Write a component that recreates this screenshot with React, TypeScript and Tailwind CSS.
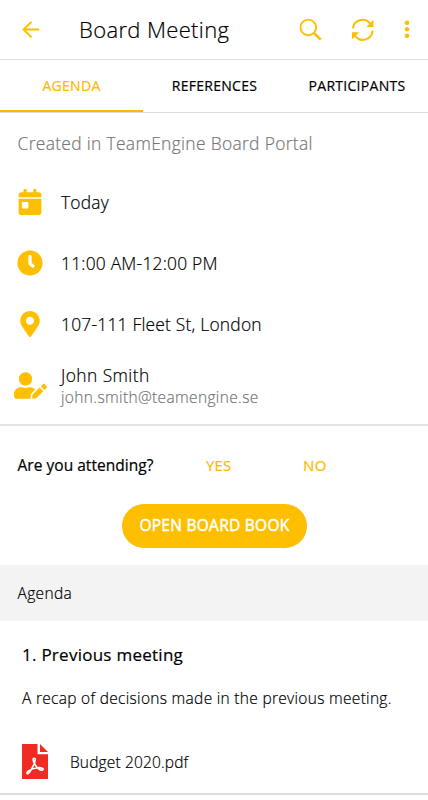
import type { ReactNode } from "react";
import { FaCalendarDay, FaClock, FaMapMarkerAlt, FaUserEdit } from "react-icons/fa";

function BackIcon() {
    return (
        <svg width="18" height="18" viewBox="0 0 18 18" fill="none" stroke="currentColor" strokeWidth="2">
            <path d="M17.2 8.5H1.5M9.5 .9L1.6 8.5L9.5 16.2" />
        </svg>
    );
}

function SearchIcon() {
    return (
        <svg width="24" height="24" viewBox="0 0 24 24" fill="none" stroke="currentColor">
            <circle cx="9.3" cy="9.4" r="7.8" strokeWidth="1.9" />
            <path d="M14.9 15L21.8 21.6" strokeWidth="2.5" />
        </svg>
    );
}

function SyncIcon() {
    return (
        <svg width="24" height="24" viewBox="0 0 24 24" fill="none" stroke="currentColor" strokeWidth="2">
            <path d="M1.9 10.4A9.6 9.6 0 0 1 19 5.6" />
            <path d="M21.5 12.6A9.6 9.6 0 0 1 4 17.6" />
            <path d="M22.5 1.8V8.9H15.3Z" fill="currentColor" stroke="none" />
            <path d="M1 21.4V14.3H8.2Z" fill="currentColor" stroke="none" />
        </svg>
    );
}

function MoreIcon() {
    return (
        <svg width="6" height="20" viewBox="0 0 6 20" fill="currentColor">
            <circle cx="3" cy="2.8" r="2.3" />
            <circle cx="3" cy="9.3" r="2.2" />
            <circle cx="3" cy="15.8" r="2.3" />
        </svg>
    );
}

function PdfIcon() {
    return (
        <svg width="26" height="35" viewBox="0 0 26 35" fill="none">
            <path d="M0 0H15.5V10.2H26V35H0Z" fill="#f02b22" />
            <path d="M18 0L26 8H18Z" fill="#f02b22" />
            <path
                d="M12.2 14.2C9.9 14.2 11.8 18.8 13.4 21.2C15.4 24 18.7 26.6 20.6 25.9C22.5 24.8 19.2 23.5 16.1 23.7C12.2 24 8.6 25.3 6.2 27.1C3.7 29 5.4 31 7.3 28.6C9.7 25.6 13.1 18.7 13.2 15.8C13.2 14.7 12.8 14.2 12.2 14.2Z"
                stroke="#fff"
                strokeWidth="1.6"
            />
        </svg>
    );
}

function InfoRow({ icon, children }: { icon: ReactNode; children: ReactNode }) {
    return (
        <div className="flex h-[61px] items-center">
            <div className="mr-px flex w-[60px] justify-center text-[#fdbf00]">{icon}</div>
            <div className="text-[17.4px] leading-6 tracking-[0.22px]">{children}</div>
        </div>
    );
}

export default function App() {
    return (
        <div className="h-[800px] w-[428px] overflow-hidden bg-white font-['Open_Sans',sans-serif] font-light whitespace-nowrap text-black [-webkit-text-stroke:0.2px_currentColor]">
            <header className="flex h-[60px] items-center border-b border-[#dedede] text-[#fdbf00]">
                <button className="ml-[22px]">
                    <BackIcon />
                </button>
                <h1 className="ml-[39px] w-[220px] pb-0.5 text-[22px] leading-8 tracking-[0.36px] text-black">Board Meeting</h1>
                <button>
                    <SearchIcon />
                </button>
                <button className="ml-7">
                    <SyncIcon />
                </button>
                <button className="ml-[28.5px]">
                    <MoreIcon />
                </button>
            </header>

            <nav className="flex h-[53px] border-b border-[#dedede] text-sm font-normal tracking-[0.28px]">
                <button className="h-[52px] w-[143px] border-b-2 border-[#fdb900] pt-0.5 text-[#fdb900]">AGENDA</button>
                <button className="h-[52px] w-[143px]">REFERENCES</button>
                <button className="h-[52px] w-[142px]">PARTICIPANTS</button>
            </nav>

            <section className="h-[313px] border-b-2 border-[#e4e4e4]">
                <p className="h-[58px] pt-[18px] pl-[17.5px] text-[17.4px] leading-6 tracking-[0.34px] text-[#777]">
                    Created in TeamEngine Board Portal
                </p>
                <InfoRow icon={<FaCalendarDay size={26} />}>Today</InfoRow>
                <InfoRow icon={<FaClock size={26} />}>11:00 AM-12:00 PM</InfoRow>
                <InfoRow icon={<FaMapMarkerAlt size={26} />}>107-111 Fleet St, London</InfoRow>
                <InfoRow icon={<FaUserEdit size={33} className="mt-0.5" />}>
                    <p className="pt-0.5 leading-[22px] tracking-[0.42px]">John Smith</p>
                    <p className="text-[15.5px] leading-[22px] tracking-[0.36px] text-[#777]">john.smith@teamengine.se</p>
                </InfoRow>
            </section>

            <section className="h-[139px] pt-[27px]">
                <div className="flex leading-6 font-normal">
                    <span className="w-[188px] pl-[17.5px] text-[15.5px] tracking-[0.03px]">Are you attending?</span>
                    <button className="w-[97px] pl-[18px] text-left text-[15px] tracking-[0.2px] text-[#fdb900]">YES</button>
                    <button className="pl-[18px] text-left text-[15px] tracking-[0.4px] text-[#fdb900]">NO</button>
                </div>
                <button className="mt-[27px] ml-[122px] h-[44px] w-[185px] rounded-full bg-[#fdbf00] text-[15.5px] font-medium tracking-[0.27px] text-white [-webkit-text-stroke:0.5px_currentColor]">
                    OPEN BOARD BOOK
                </button>
            </section>

            <h2 className="flex h-14 items-center bg-[#f3f3f3] pt-px pl-[17.5px] text-[15.5px] tracking-[0.35px]">Agenda</h2>

            <section className="h-[174px] border-b-2 border-[#dedede] pt-[22px] pl-[22px]">
                <h3 className="text-[17px] leading-6 font-normal tracking-[0.26px]">1. Previous meeting</h3>
                <p className="mt-[19px] text-[15.5px] leading-6 tracking-[0.3px]">A recap of decisions made in the previous meeting.</p>
                <div className="mt-[34px] flex items-center">
                    <PdfIcon />
                    <span className="ml-[22px] text-[15.5px] leading-6 tracking-[0.15px]">Budget 2020.pdf</span>
                </div>
            </section>
        </div>
    );
}
